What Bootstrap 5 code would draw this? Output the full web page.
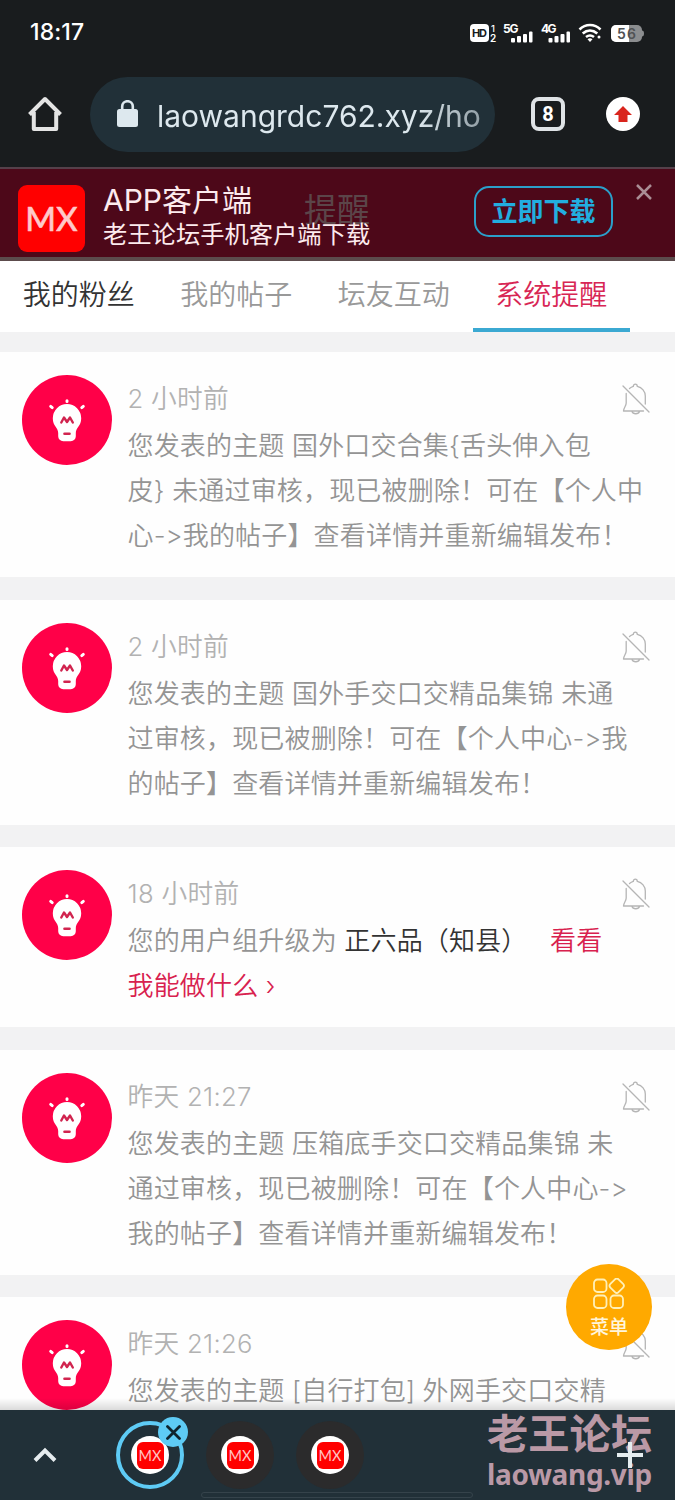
<!DOCTYPE html>
<html lang="zh-CN">
<head>
<meta charset="utf-8">
<meta name="viewport" content="width=device-width, initial-scale=1">
<title>系统提醒</title>
<link href="https://cdn.jsdelivr.net/npm/bootstrap@5.3.0/dist/css/bootstrap.min.css" rel="stylesheet">
<style>
body{font-family:Inter,"Noto Sans CJK SC",sans-serif;background:#f2f2f3;width:675px;height:1500px;overflow:hidden;line-height:1}
svg{display:block;flex:none}
.chrome-top{background:#191c1e;height:167px;color:#fff}
.status{height:65px;padding:0 30px 0 30px}
.clock{font-size:23px;font-weight:500;letter-spacing:.1px}
.toolbar-row{height:98px;padding-left:27px}
.omni{width:405px;height:75px;border-radius:38px;background:#213038;margin-left:27px;padding-left:27px;color:#dde8ee}
.url{font-size:30px;margin-left:19px;width:325px;white-space:nowrap;letter-spacing:0;overflow:hidden;line-height:44px;padding-top:3px;-webkit-mask-image:linear-gradient(90deg,#000 80%,rgba(0,0,0,.6))}
.tabcount{width:34px;height:34px;border:4px solid #dfe3e6;border-radius:8px;font-size:20px;font-weight:700;margin-left:36px;font-family:Roboto,sans-serif}
.appbar{height:94px;background:#4d0819;border-top:2px solid #55404a;border-bottom:4px solid #5c4b4c;padding-left:18px}
.mx-logo{width:67px;height:67px;border-radius:9px;background:#f00;color:#ffc9c9;font:500 33px Lato,sans-serif;margin-top:10px;-webkit-text-stroke:.5px #ffc9c9}
.ghost{left:304px;top:25px;font-size:33px;color:#5b4549}
.app-title{font-size:30px;line-height:34px;color:#fdebee;margin-left:18px;padding-top:8px}
.app-title small{display:block;font-size:24.3px;line-height:34px}
.dl{position:absolute;left:474px;top:17px;width:139px;height:51px;border:2px solid #2b9fca;border-radius:15px;color:#22aee0;font-size:26px;font-weight:700}
.close-x{position:absolute;left:636px;top:15px}
.tabs4{height:71px;background:#fff;color:#999;width:675px}
.tabs4 a{width:157.5px;height:71px;line-height:69px;font-size:28px;text-align:center;color:inherit;text-decoration:none;font-weight:350}
.tabs4 a.dark{color:#333}
.tabs4 a.on{color:#d82654;border-bottom:4px solid #3ba9d2}
.feed{margin-top:20px;flex:1;overflow:hidden;position:relative}
.feed:after{content:"";position:absolute;left:0;right:0;bottom:0;height:12px;background:linear-gradient(transparent,rgba(0,0,0,.14))}
.note{background:#fefefe;margin-bottom:22.5px;padding:23px 0 0 22px;height:225px}
.note.short{height:180px}
.msg{margin-left:15.5px;width:522.5px;font-weight:350;color:#949494;font-size:26px;letter-spacing:.17px}
.msg p{line-height:45px;white-space:nowrap;margin:0;position:relative}
.msg time{display:flex;justify-content:space-between;height:48px;line-height:48px;font-size:25.7px;color:#b2b2b2;letter-spacing:.3px}
.msg time svg{margin-top:8px}
.msg .dark{color:#333}.msg .rose{color:#d8214e}
.fab{position:absolute;left:566px;top:1264px;width:86px;height:86px;background:#ffa900;color:#fff5dc;font-size:19px;font-weight:500;z-index:3}
.dock{height:90px;background:#213038;position:relative;padding-left:32px}
.fav{width:68px;height:68px;background:#2b2b2c}
.fav.sel{background:none;border:4px solid #5ecbf5;position:relative}
.fav .inner{width:27px;height:27px;background:#f00;border-radius:6px;font:400 14.5px Lato,sans-serif;color:#ffc4c4}
.fav .disc{width:38px;height:38px;background:#fff}
.fav .off{position:absolute;left:38px;top:-8px;width:30px;height:30px;background:#5ecbf5}
.mark-wrap{position:absolute;left:487px;top:3px;color:#ba99a6;font-weight:700;white-space:nowrap}
.mark-cn{font-size:41.3px;line-height:43px}
.mark-en{font:700 28px/36px "Noto Sans",sans-serif;letter-spacing:-.35px}
.handle{position:absolute;left:201px;top:82px;width:272px;height:6px;border:1px solid #35434b;border-radius:3px}
</style>
</head>
<body class="d-flex flex-column position-relative">
<svg width="0" height="0" class="position-absolute">
<symbol id="bulb" viewBox="0 0 90 90"><circle cx="45" cy="45" r="45" fill="#ff0048"/><g fill="#fff"><path d="M45 29a14.2 14.2 0 0 0-14.2 14.2c0 8 5.4 9.300 5.400 14.800v3.200a5 5 0 0 0 5 5h7.600a5 5 0 0 0 5-5V58c0-5.500 5.400-6.800 5.400-14.800A14.200 14.200 0 0 0 45 29z"/><g stroke="#fff" stroke-width="3" stroke-linecap="round"><path d="M45 26.500v-.8M30.200 32.600l-1.500-1.200M59.800 32.600l1.500-1.200"/></g></g><path d="M39.300 47.500l2.700-5 3 4.500 3-4.500 2.800 5" fill="none" stroke="#d1244f" stroke-width="2.400" stroke-linejoin="round" stroke-linecap="round"/><path d="M42.500 58.800h5" stroke="#d1244f" stroke-width="2.600" stroke-linecap="round"/></symbol>
<symbol id="mute" viewBox="0 0 28 32"><g fill="none" stroke="#b5b5b5" stroke-width="1.300" stroke-linecap="round" stroke-linejoin="round"><path d="M1 3l26 26M7.500 5.500C9 4.200 10 3.800 11.300 3.400c0-3 4-3 4 0 4.700 1 8 5 8 9.600v8M4.200 10.500V20c0 3-2.600 5-2.700 8h20M10 28.500c1 3 6.500 3 7.500 0"/></g></symbol>
</svg>

<header class="chrome-top flex-shrink-0">
 <div class="status d-flex align-items-center justify-content-between">
  <span class="clock">18:17</span>
  <svg width="176" height="24" viewBox="0 0 176 24" fill="#fff" font-family="Inter,sans-serif" font-weight="700">
   <rect x="1" y="3" width="19" height="18" rx="4"/><text x="3" y="16.300" font-size="11" fill="#191c1e" textLength="15">HD</text>
   <text x="22" y="10.500" font-size="9.500" font-weight="500">1</text><text x="21" y="21" font-size="10" font-weight="600">2</text>
   <text x="34" y="12" font-size="12" textLength="15.500">5G</text><g id="bars"><rect x="42" y="17" width="4" height="4.500" rx="1"/><rect x="48" y="15" width="4" height="6.500" rx="1"/><rect x="54" y="13" width="4" height="8.500" rx="1"/><rect x="60" y="10.500" width="3.500" height="11" rx="1"/></g>
   <text x="72" y="12" font-size="12" textLength="15.500">4G</text><use href="#bars" x="37.500"/>
   <g fill="none" stroke="#fff" stroke-width="2.600"><path d="M110.500 8.500c6-6 15-6 21 0M113.700 12.500c4.500-4 10-4 14.600 0M117 16c2.600-2 5.400-2 8 0"/></g><path d="M118.500 18.200q2.500-1.800 5 0L121 21z"/><circle cx="130" cy="16" r="1.500"/>
   <rect x="142" y="4" width="31" height="17" rx="5" fill="#8b8d8f"/><path d="M147 4h13v17h-13a5 5 0 0 1-5-5V9a5 5 0 0 1 5-5z"/><path d="M173 9.500q2 0 2 3t-2 3z" fill="#8b8d8f"/><text x="148" y="17.600" font-size="14" font-weight="600" fill="#505254" textLength="19">56</text>
  </svg>
 </div>
 <div class="toolbar-row d-flex align-items-center">
  <svg width="36" height="36" viewBox="0 0 36 36" fill="none" stroke="#e4e4e4" stroke-width="4"><path d="M2.500 18.500L18 3l15.500 15.500M6.800 16v17h22.400V16" stroke-linejoin="round"/></svg>
  <div class="omni d-flex align-items-center"><svg width="21" height="28" viewBox="0 0 21 28"><rect y="9" width="21" height="18" rx="2.500" fill="#dde8ee"/><path d="M5.200 10V6.500a5.300 5.300 0 0 1 10.600 0V10" fill="none" stroke="#dde8ee" stroke-width="2.600"/></svg><span class="url">laowangrdc762.xyz/ho</span></div>
  <span class="tabcount d-flex align-items-center justify-content-center">8</span>
  <svg width="34" height="34" viewBox="0 0 34 34" style="margin-left:41px"><circle cx="17" cy="17" r="17" fill="#fff"/><path d="M17 9l9 9h-4.500v7h-9v-7H8z" fill="#d9251d"/></svg>
 </div>
</header>

<section class="appbar d-flex align-items-center position-relative flex-shrink-0">
 <span class="ghost position-absolute">提醒</span>
 <div class="mx-logo d-flex align-items-center justify-content-center">MX</div>
 <div class="app-title position-relative">APP客户端<small>老王论坛手机客户端下载</small></div>
 <a class="dl d-flex align-items-center justify-content-center text-decoration-none">立即下载</a>
 <svg class="close-x" width="16" height="16" viewBox="0 0 16 16" stroke="#aa8e95" stroke-width="2.500"><path d="M1 1l14 14M15 1L1 15"/></svg>
</section>

<nav class="tabs4 d-flex flex-shrink-0"><a class="dark">我的粉丝</a><a>我的帖子</a><a>坛友互动</a><a class="on">系统提醒</a></nav>

<main class="feed">
 <article class="note d-flex"><svg width="90" height="90"><use href="#bulb"/></svg><div class="msg"><time>2 小时前<svg width="28" height="32"><use href="#mute"/></svg></time><p>您发表的主题 国外口交合集{舌头伸入包</p><p>皮} 未通过审核，现已被删除！可在【个人中</p><p>心-&gt;我的帖子】查看详情并重新编辑发布！</p></div></article>
 <article class="note d-flex"><svg width="90" height="90"><use href="#bulb"/></svg><div class="msg"><time>2 小时前<svg width="28" height="32"><use href="#mute"/></svg></time><p>您发表的主题 国外手交口交精品集锦 未通</p><p>过审核，现已被删除！可在【个人中心-&gt;我</p><p>的帖子】查看详情并重新编辑发布！</p></div></article>
 <article class="note short d-flex"><svg width="90" height="90"><use href="#bulb"/></svg><div class="msg"><time>18 小时前<svg width="28" height="32"><use href="#mute"/></svg></time><p>您的用户组升级为 <span class="dark">正六品（知县）</span> &nbsp; <span class="rose">看看</span></p><p class="rose">我能做什么 ›</p></div></article>
 <article class="note d-flex"><svg width="90" height="90"><use href="#bulb"/></svg><div class="msg"><time>昨天 21:27<svg width="28" height="32"><use href="#mute"/></svg></time><p>您发表的主题 压箱底手交口交精品集锦 未</p><p>通过审核，现已被删除！可在【个人中心-&gt;</p><p>我的帖子】查看详情并重新编辑发布！</p></div></article>
 <article class="note d-flex"><svg width="90" height="90"><use href="#bulb"/></svg><div class="msg"><time>昨天 21:26<svg width="28" height="32"><use href="#mute"/></svg></time><p>您发表的主题 [自行打包] 外网手交口交精</p></div></article>
</main>

<a class="fab rounded-circle d-flex flex-column align-items-center text-decoration-none"><svg width="32" height="32" viewBox="0 0 32 32" fill="none" stroke="#fff0b8" stroke-width="1.800" style="margin:14px 0 8px"><rect x="1" y="1.500" width="12.500" height="12.500" rx="3.500"/><rect x="18" y="2" width="11.500" height="11.500" rx="2.500" transform="rotate(45 23.750 7.750)"/><rect x="1" y="17.500" width="12.500" height="12.500" rx="3.500"/><rect x="17.500" y="17.500" width="12.500" height="12.500" rx="3.500"/></svg>菜单</a>

<footer class="dock d-flex align-items-center flex-shrink-0">
 <svg width="26" height="20" viewBox="0 0 26 20" fill="none" stroke="#e6ecef" stroke-width="4"><path d="M3 15.500L13 5.500l10 10"/></svg>
 <div class="d-flex" style="gap:22px;margin-left:58px">
  <div class="fav sel rounded-circle d-flex align-items-center justify-content-center"><div class="disc rounded-circle d-flex align-items-center justify-content-center"><div class="inner d-flex align-items-center justify-content-center">MX</div></div><span class="off rounded-circle d-flex align-items-center justify-content-center"><svg width="15" height="15" viewBox="0 0 15 15" stroke="#10242e" stroke-width="2.800" stroke-linecap="round"><path d="M1.500 1.500l12 12M13.500 1.500l-12 12"/></svg></span></div>
  <div class="fav rounded-circle d-flex align-items-center justify-content-center"><div class="disc rounded-circle d-flex align-items-center justify-content-center"><div class="inner d-flex align-items-center justify-content-center">MX</div></div></div>
  <div class="fav rounded-circle d-flex align-items-center justify-content-center"><div class="disc rounded-circle d-flex align-items-center justify-content-center"><div class="inner d-flex align-items-center justify-content-center">MX</div></div></div>
 </div>
 <div class="mark-wrap"><div class="mark-cn">老王论坛</div><div class="mark-en">laowang.vip</div></div>
 <svg class="position-absolute" style="left:617px;top:32px" width="26" height="26" viewBox="0 0 26 26" stroke="#e5edf0" stroke-width="4"><path d="M13 0v26M0 13h26"/></svg>
 <span class="handle"></span>
</footer>
<script src="https://cdn.jsdelivr.net/npm/bootstrap@5.3.0/dist/js/bootstrap.bundle.min.js"></script>
</body>
</html>
